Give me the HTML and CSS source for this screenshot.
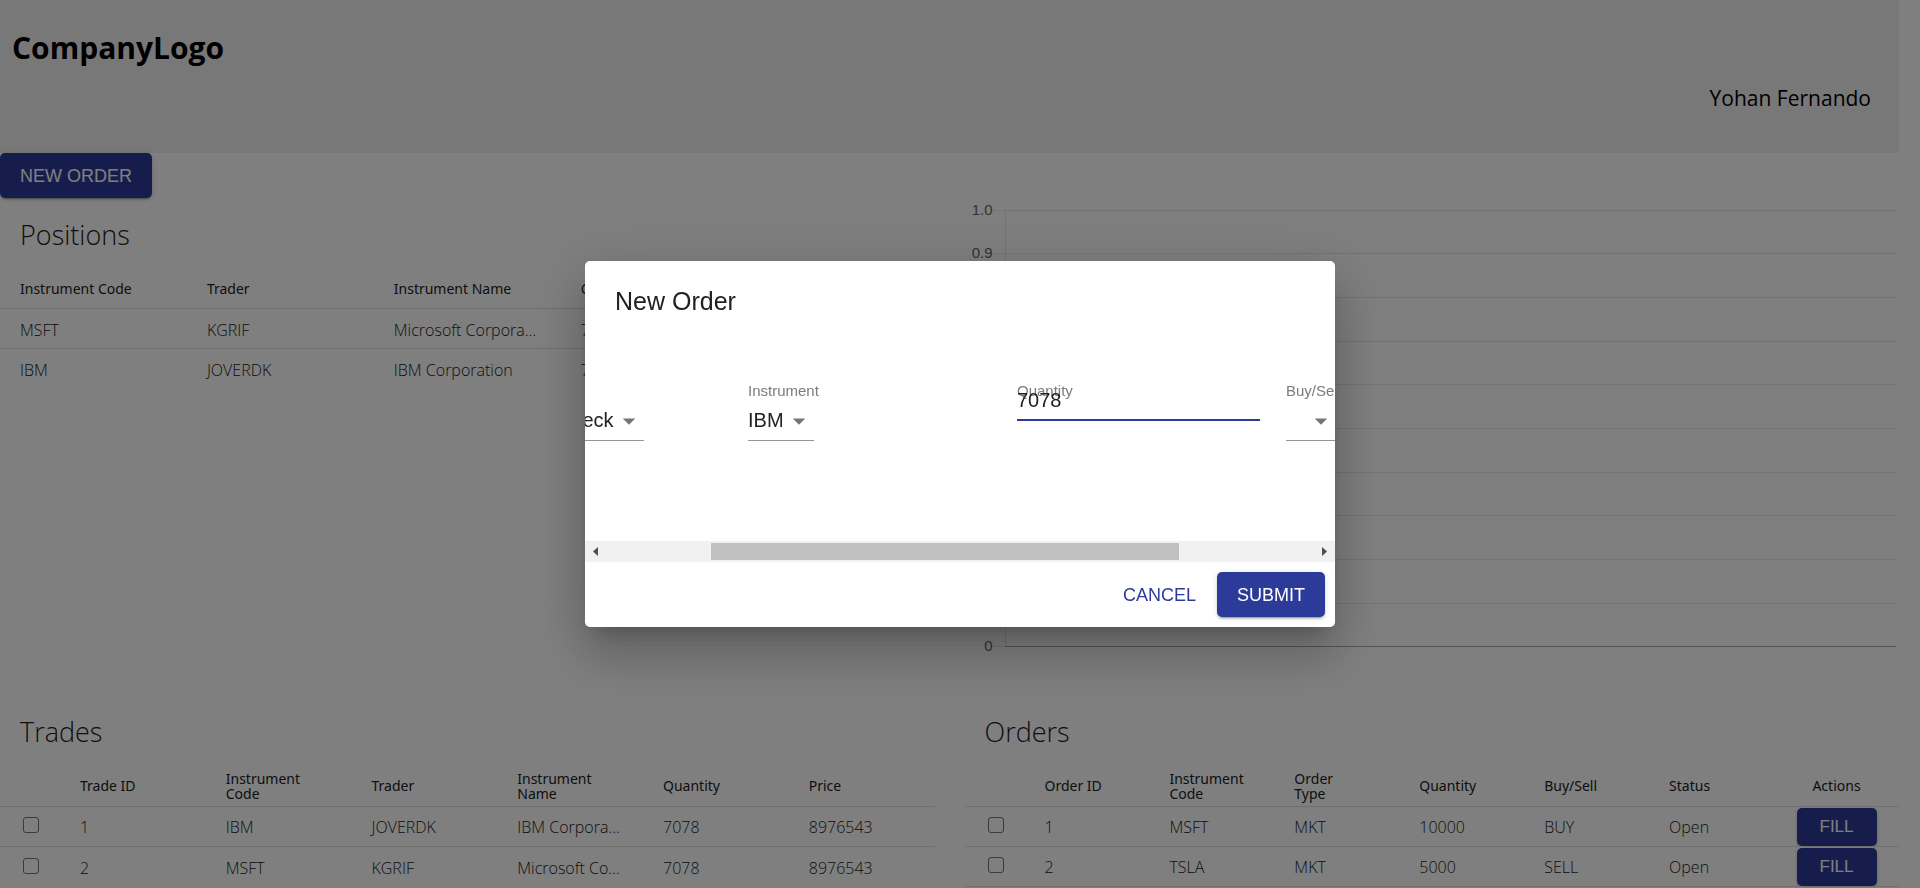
FILE: index.html
```html
<!DOCTYPE html>
<html lang="en">
<head>
<meta charset="utf-8">
<title>Orders dashboard</title>
<link rel="stylesheet" href="styles.css">
</head>
<body>
<div class="page">
  <header class="header">
    <h1 class="logo">CompanyLogo</h1>
    <span class="user">Yohan Fernando</span>
  </header>
  <button class="btn btn-primary" type="button">NEW ORDER</button>
  <main class="dashboard">
    <section class="panel panel-top">
      <h2 class="panel-title">Positions</h2>
      <table class="grid">
        <thead><tr><th>Instrument Code</th><th>Trader</th><th>Instrument Name</th><th>Quantity</th><th>Price</th></tr></thead>
        <tbody>
          <tr><td>MSFT</td><td>KGRIF</td><td>Microsoft Corporation</td><td>7078</td><td>8976543</td></tr>
          <tr><td>IBM</td><td>JOVERDK</td><td>IBM Corporation</td><td>7078</td><td>8976543</td></tr>
        </tbody>
      </table>
    </section>
    <section class="chart" aria-label="Positions chart">
      <div class="tick"><span class="tick-label">1.0</span><span class="tick-line"></span></div>
      <div class="tick"><span class="tick-label">0.9</span><span class="tick-line"></span></div>
      <div class="tick"><span class="tick-label">0.8</span><span class="tick-line"></span></div>
      <div class="tick"><span class="tick-label">0.7</span><span class="tick-line"></span></div>
      <div class="tick"><span class="tick-label">0.6</span><span class="tick-line"></span></div>
      <div class="tick"><span class="tick-label">0.5</span><span class="tick-line"></span></div>
      <div class="tick"><span class="tick-label">0.4</span><span class="tick-line"></span></div>
      <div class="tick"><span class="tick-label">0.3</span><span class="tick-line"></span></div>
      <div class="tick"><span class="tick-label">0.2</span><span class="tick-line"></span></div>
      <div class="tick"><span class="tick-label">0.1</span><span class="tick-line"></span></div>
      <div class="tick tick-zero"><span class="tick-label">0</span><span class="tick-line"></span></div>
    </section>
    <section class="panel">
      <h2 class="panel-title">Trades</h2>
      <table class="grid grid-check">
        <thead><tr><th class="check"></th><th>Trade ID</th><th>Instrument Code</th><th>Trader</th><th>Instrument Name</th><th>Quantity</th><th>Price</th></tr></thead>
        <tbody>
          <tr><td class="check"><input type="checkbox" aria-label="Select trade 1"></td><td>1</td><td>IBM</td><td>JOVERDK</td><td>IBM Corporation</td><td>7078</td><td>8976543</td></tr>
          <tr class="tall"><td class="check"><input type="checkbox" aria-label="Select trade 2"></td><td>2</td><td>MSFT</td><td>KGRIF</td><td>Microsoft Corporation</td><td>7078</td><td>8976543</td></tr>
        </tbody>
      </table>
    </section>
    <section class="panel">
      <h2 class="panel-title">Orders</h2>
      <table class="grid grid-check">
        <thead><tr><th class="check"></th><th>Order ID</th><th>Instrument Code</th><th>Order<br>Type</th><th>Quantity</th><th>Buy/Sell</th><th>Status</th><th class="action">Actions</th></tr></thead>
        <tbody>
          <tr><td class="check"><input type="checkbox" aria-label="Select order 1"></td><td>1</td><td>MSFT</td><td>MKT</td><td>10000</td><td>BUY</td><td>Open</td><td class="action"><button class="btn btn-primary btn-small" type="button">FILL</button></td></tr>
          <tr><td class="check"><input type="checkbox" aria-label="Select order 2"></td><td>2</td><td>TSLA</td><td>MKT</td><td>5000</td><td>SELL</td><td>Open</td><td class="action"><button class="btn btn-primary btn-small" type="button">FILL</button></td></tr>
          <tr><td class="check"><input type="checkbox" aria-label="Select order 3"></td><td>3</td><td>IBM</td><td>MKT</td><td>7078</td><td>BUY</td><td>Open</td><td class="action"><button class="btn btn-primary btn-small" type="button">FILL</button></td></tr>
        </tbody>
      </table>
    </section>
  </main>
</div>
<div class="backdrop">
  <form class="dialog" role="dialog" aria-labelledby="dialog-title">
    <h2 class="dialog-title" id="dialog-title">New Order</h2>
    <div class="dialog-body">
      <div class="fields">
        <div class="field">
          <label for="trader">Trader</label>
          <div class="select"><select id="trader"><option>John Overdeck</option></select><svg viewBox="0 0 24 24"><path d="M7 10l5 5 5-5z"/></svg></div>
        </div>
        <div class="field">
          <label for="instrument">Instrument</label>
          <div class="select"><select id="instrument"><option>IBM</option></select><svg viewBox="0 0 24 24"><path d="M7 10l5 5 5-5z"/></svg></div>
        </div>
        <div class="field">
          <label for="quantity">Quantity</label>
          <input class="text-input" id="quantity" type="text" value="7078">
        </div>
        <div class="field">
          <label for="side">Buy/Sell</label>
          <div class="select"><select id="side"><option></option></select><svg viewBox="0 0 24 24"><path d="M7 10l5 5 5-5z"/></svg></div>
        </div>
      </div>
    </div>
    <div class="scrollbar">
      <svg class="arrow" viewBox="0 0 5 9"><path d="M5 0v9L0 4.5z"/></svg>
      <div class="track"><div class="thumb"></div></div>
      <svg class="arrow" viewBox="0 0 5 9"><path d="M0 0v9l5-4.5z"/></svg>
    </div>
    <div class="dialog-actions">
      <button class="btn btn-text" type="button">CANCEL</button>
      <button class="btn btn-primary" type="submit">SUBMIT</button>
    </div>
  </form>
</div>
</body>
</html>
```

FILE: styles.css
```css
* { box-sizing: border-box; }
html { overflow: hidden; }
body {
  margin: 0;
  height: 100vh;
  overflow: hidden;
  background: #fff;
  color: #000;
  font-family: "Open Sans", "Noto Sans", sans-serif;
}
.page { margin-right: 21px; }

.header {
  display: flex;
  flex-direction: column;
  padding: 24px 28px 37px 12px;
  background: #f0f0f0;
}
.logo { margin: 0; font-size: 30px; line-height: 48px; font-weight: 700; }
.user { align-self: flex-end; margin-top: 9px; font-size: 21px; line-height: 35px; }

.btn {
  height: 45px;
  padding: 1px 20px 0;
  border: 0;
  border-radius: 5px;
  font: 18px "Liberation Sans", Arial, sans-serif;
  white-space: nowrap;
}
.btn-primary {
  display: block;
  background: #2c3b9a;
  color: #fff;
  box-shadow: 0 4px 1px -3px rgba(0,0,0,.2), 0 2px 2px rgba(0,0,0,.14), 0 1px 6px rgba(0,0,0,.12);
}
.btn-small { width: 80px; height: 38px; padding: 0; font-size: 17px; }
.btn-text { padding: 1px 11px 0; background: none; color: #2c3b9a; }

.dashboard {
  display: grid;
  grid-template-columns: minmax(0, 1fr) minmax(0, 1fr);
  column-gap: 30px;
}
.panel-top { min-height: 497px; }
.panel-title {
  margin: 0;
  padding: 2px 20px 0;
  color: #212121;
  font-size: 27px;
  font-weight: 300;
  line-height: 70px;
}

.grid { width: 100%; border-collapse: separate; border-spacing: 0; table-layout: fixed; color: #212121; }
.grid th {
  height: 39px;
  padding: 0 20px 2px;
  border-bottom: 1px solid #e0e0e0;
  font-family: "Noto Sans", "Open Sans", sans-serif;
  font-size: 14px;
  font-weight: 400;
  line-height: 15px;
  text-align: left;
}
.grid-check th { height: 40px; }
.grid td {
  height: 40px;
  padding: 2px 20px 0;
  border-bottom: 1px solid #e0e0e0;
  font-size: 16px;
  font-weight: 300;
  line-height: 20px;
  overflow: hidden;
  text-overflow: ellipsis;
  white-space: nowrap;
}
.grid-check td { padding-top: 1px; }
.grid tr:last-child td { border-bottom: 0; }
.grid .tall td { height: 41px; }
.grid .check { width: 60px; padding: 0 20px 0 23px; }
.grid th.action { padding: 0 20px 2px; text-align: center; }
.grid td.action { padding: 0 20px; }
.grid .action .btn { margin: 0 auto; }
.check input {
  display: block;
  appearance: none;
  width: 16px;
  height: 16px;
  margin: 0 0 3px;
  border: 1px solid #767676;
  border-radius: 3px;
  background: #fff;
}

.chart {
  display: flex;
  flex-direction: column;
  justify-content: space-between;
  height: 455px;
  margin: 3px 3px 0 4px;
  color: #666;
  font: 15px/18px "Liberation Sans", Arial, sans-serif;
}
.tick { display: flex; flex: 0 0 18px; align-items: center; }
.tick-label { width: 24px; margin-top: -1px; text-align: right; }
.tick-line {
  position: relative;
  flex: 1;
  height: 1px;
  background: #e6e6e6;
}
/* vertical axis segment reaching down to the next tick */
.tick:not(.tick-zero) .tick-line::before {
  content: "";
  position: absolute;
  left: 12px;
  top: 0;
  width: 1px;
  height: 44px;
  background: #e6e6e6;
}
.tick-zero .tick-line { background: linear-gradient(90deg, #e6e6e6 12px, #a8a8a8 12px); }

.backdrop {
  position: fixed;
  inset: 0;
  display: flex;
  align-items: center;
  justify-content: center;
  background: rgba(0,0,0,.5);
}
.dialog {
  width: 750px;
  border-radius: 5px;
  background: #fff;
  color: #212121;
  font-family: "Liberation Sans", Arial, sans-serif;
  box-shadow: 0 14px 19px -9px rgba(0,0,0,.2), 0 30px 48px 4px rgba(0,0,0,.14), 0 11px 58px 10px rgba(0,0,0,.12);
}
.dialog-title { margin: 0; padding: 20px 30px; font-size: 25px; font-weight: 400; line-height: 40px; }
.dialog-body { overflow: hidden; padding: 41px 0 100px; }
.fields {
  display: grid;
  grid-template-columns: repeat(4, 243px);
  column-gap: 26px;
  margin-left: -106px;
}
.field { position: relative; height: 59px; }
.field label {
  position: absolute;
  left: 0;
  top: 0;
  color: #7b7b7b;
  font-size: 15px;
  line-height: 18px;
}
.select { position: relative; width: fit-content; margin-top: 19px; }
.select select {
  display: block;
  appearance: none;
  height: 40px;
  min-width: 50px;
  padding: 7px 30px 8px 0;
  border: 0;
  border-bottom: 1px solid #949494;
  border-radius: 0;
  background: none;
  color: inherit;
  font: 20px/24px "Liberation Sans", Arial, sans-serif;
}
.select svg {
  position: absolute;
  right: 0;
  top: 5px;
  width: 30px;
  height: 30px;
  fill: #757575;
  pointer-events: none;
}
.text-input {
  display: block;
  position: relative;
  width: 100%;
  height: 39px;
  padding: 5px 0 6px;
  border: 0;
  border-bottom: 2px solid #2c3b9a;
  background: none;
  color: inherit;
  font: 20px/24px "Liberation Sans", Arial, sans-serif;
}

.scrollbar {
  display: flex;
  align-items: center;
  justify-content: space-between;
  height: 21px;
  padding: 0 8px;
  background: #f1f1f1;
}
.arrow { width: 5px; height: 9px; fill: #505050; }
.track { flex: 1; margin: 0 8px 0 6px; }
.thumb { width: 66%; height: 17px; margin-left: 15%; background: #c1c1c1; }
.dialog-actions { display: flex; justify-content: flex-end; gap: 10px; padding: 10px; }
```
